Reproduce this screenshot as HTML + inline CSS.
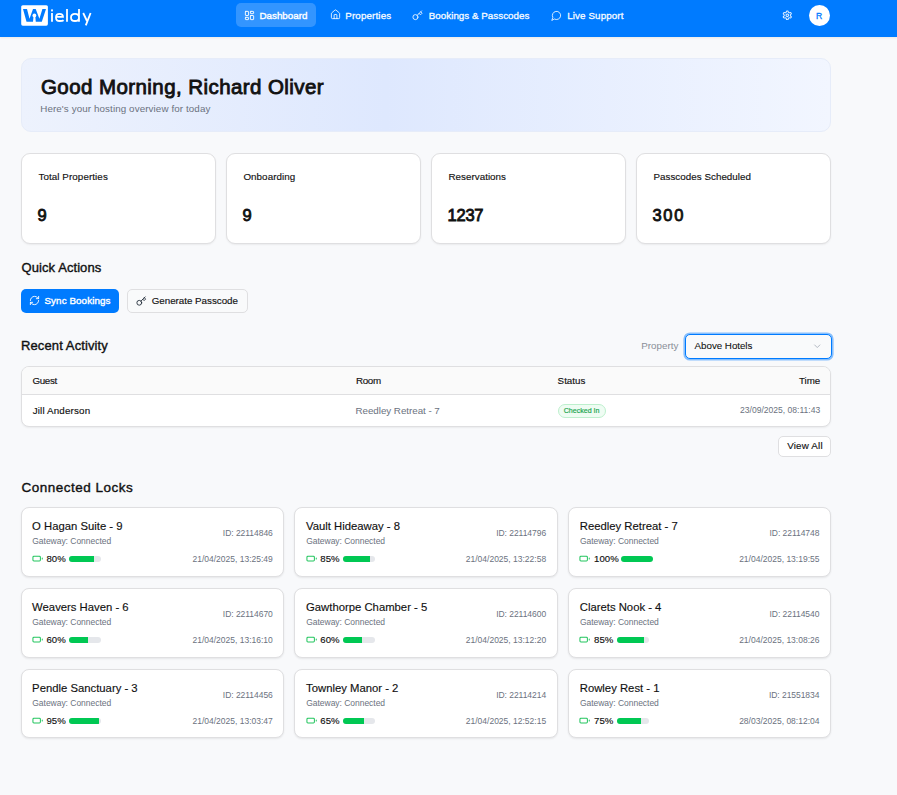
<!DOCTYPE html>
<html><head><meta charset="utf-8"><title>Wieldy Dashboard</title>
<style>
html,body{margin:0;padding:0}
body{width:897px;height:795px;position:relative;overflow:hidden;background:#f8f9fb;font-family:"Liberation Sans", sans-serif}
.t{position:absolute;white-space:nowrap;font-family:"Liberation Sans", sans-serif}
svg{display:block}
</style></head><body>
<div style="position:absolute;left:0px;top:0px;width:897px;height:37px;box-sizing:border-box;background:#007bff;box-shadow:0 1px 2px rgba(60,40,0,0.08)"></div>
<svg style="position:absolute;left:20px;top:4px" width="80" height="23" viewBox="0 0 80 23">
<rect x="1.2" y="1.2" width="26.7" height="20.5" rx="1.6" fill="#fff"/>
<path d="M3,5 L7,5 L9.5,14.7 L13,5 L15.7,5 L19.4,14.7 L22.4,5 L26,5 L21.8,17.7 L6.5,17.7 Z" fill="#007bff"/>
<circle cx="14.4" cy="11.4" r="1.9" fill="#fff"/>
<path d="M13.5,12.2 L15.3,12.2 L15.8,17.9 L13,17.9 Z" fill="#fff"/>
<g fill="none" stroke="#fff" stroke-width="1.8">
<rect x="31.1" y="5.4" width="1.8" height="2" fill="#fff" stroke="none"/>
<line x1="32" y1="9.1" x2="32" y2="17.7"/>
<path d="M43.6,16.2 Q42.6,17 39.6,17 Q36,17 36,13.4 Q36,9.8 39.5,9.8 Q43,9.8 43,12.9 H36.2"/>
<line x1="47" y1="5.1" x2="47" y2="17.7"/>
<path d="M59,13.4 Q59,9.8 55,9.8 Q51,9.8 51,13.4 Q51,17 55,17 Q59,17 59,13.4 M59,5.1 V17.7"/>
<line x1="63.2" y1="9" x2="67" y2="17"/>
<line x1="70.6" y1="9" x2="65.8" y2="21.4"/>
</g></svg>
<div style="position:absolute;left:236px;top:3px;width:80px;height:24px;box-sizing:border-box;background:rgba(255,255,255,0.2);border-radius:5px"></div>
<svg style="position:absolute;left:243.9px;top:10.2px" width="11" height="11" viewBox="0 0 24 24" fill="none" stroke="#fff" stroke-width="2" stroke-linecap="round" stroke-linejoin="round"><rect width="7" height="9" x="3" y="3" rx="1"/><rect width="7" height="5" x="14" y="3" rx="1"/><rect width="7" height="9" x="14" y="12" rx="1"/><rect width="7" height="5" x="3" y="16" rx="1"/></svg>
<div class="t" style="left:259.41px;top:11.00px;font-size:9.8px;line-height:9.8px;color:#fff;-webkit-text-stroke:0.38px #fff;letter-spacing:0.02px;">Dashboard</div>
<svg style="position:absolute;left:329.8px;top:9.4px" width="11" height="11" viewBox="0 0 24 24" fill="none" stroke="rgba(255,255,255,0.9)" stroke-width="2" stroke-linecap="round" stroke-linejoin="round"><path d="M15 21v-8a1 1 0 0 0-1-1h-4a1 1 0 0 0-1 1v8"/><path d="M3 10a2 2 0 0 1 .709-1.528l7-5.999a2 2 0 0 1 2.582 0l7 5.999A2 2 0 0 1 21 10v9a2 2 0 0 1-2 2H5a2 2 0 0 1-2-2z"/></svg>
<div class="t" style="left:345.21px;top:11.00px;font-size:9.8px;line-height:9.8px;color:rgba(255,255,255,0.9);-webkit-text-stroke:0.38px rgba(255,255,255,0.9);letter-spacing:0.148px;">Properties</div>
<svg style="position:absolute;left:412.4px;top:9.7px" width="11" height="11" viewBox="0 0 24 24" fill="none" stroke="rgba(255,255,255,0.9)" stroke-width="2" stroke-linecap="round" stroke-linejoin="round"><circle cx="7.5" cy="15.5" r="5.5"/><path d="m21 2-9.6 9.6"/><path d="m15.5 7.5 3 3L22 7l-3-3"/></svg>
<div class="t" style="left:428.81px;top:11.00px;font-size:9.8px;line-height:9.8px;color:rgba(255,255,255,0.9);-webkit-text-stroke:0.38px rgba(255,255,255,0.9);letter-spacing:0.019px;">Bookings &amp; Passcodes</div>
<svg style="position:absolute;left:550.7px;top:9.6px" width="11" height="11" viewBox="0 0 24 24" fill="none" stroke="rgba(255,255,255,0.9)" stroke-width="2" stroke-linecap="round" stroke-linejoin="round"><path d="M7.9 20A9 9 0 1 0 4 16.1L2 22Z"/></svg>
<div class="t" style="left:567.31px;top:11.00px;font-size:9.8px;line-height:9.8px;color:rgba(255,255,255,0.9);-webkit-text-stroke:0.38px rgba(255,255,255,0.9);letter-spacing:0.098px;">Live Support</div>
<svg style="position:absolute;left:782.2px;top:9.7px" width="10.6" height="10.6" viewBox="0 0 24 24" fill="none" stroke="rgba(255,255,255,0.9)" stroke-width="2.3" stroke-linecap="round" stroke-linejoin="round"><path d="M12.22 2h-.44a2 2 0 0 0-2 2v.18a2 2 0 0 1-1 1.73l-.43.25a2 2 0 0 1-2 0l-.15-.08a2 2 0 0 0-2.73.73l-.22.38a2 2 0 0 0 .73 2.73l.15.1a2 2 0 0 1 1 1.72v.51a2 2 0 0 1-1 1.74l-.15.09a2 2 0 0 0-.73 2.73l.22.38a2 2 0 0 0 2.73.73l.15-.08a2 2 0 0 1 2 0l.43.25a2 2 0 0 1 1 1.73V20a2 2 0 0 0 2 2h.44a2 2 0 0 0 2-2v-.18a2 2 0 0 1 1-1.73l.43-.25a2 2 0 0 1 2 0l.15.08a2 2 0 0 0 2.73-.73l.22-.39a2 2 0 0 0-.73-2.73l-.15-.08a2 2 0 0 1-1-1.74v-.5a2 2 0 0 1 1-1.74l.15-.09a2 2 0 0 0 .73-2.73l-.22-.38a2 2 0 0 0-2.73-.73l-.15.08a2 2 0 0 1-2 0l-.43-.25a2 2 0 0 1-1-1.73V4a2 2 0 0 0-2-2z"/><circle cx="12" cy="12" r="3"/></svg>
<div style="position:absolute;left:809px;top:5px;width:21px;height:21px;box-sizing:border-box;background:#fff;border-radius:50%"></div>
<div class="t" style="left:816.01px;top:11.00px;font-size:9.8px;line-height:9.8px;color:#007bff;-webkit-text-stroke:0.35px #007bff;transform:scaleX(0.88);transform-origin:left;">R</div>
<div style="position:absolute;left:21px;top:58px;width:810px;height:74px;box-sizing:border-box;background:linear-gradient(90deg,#edf2fd 0%,#dee8fe 45%,#f2f6ff 100%);border:1px solid #e6ecf9;border-radius:10px"></div>
<div class="t" style="left:40.97px;top:76.95px;font-size:20.5px;line-height:20.5px;color:#111111;-webkit-text-stroke:0.85px #111111;letter-spacing:0.427px;">Good Morning, Richard Oliver</div>
<div class="t" style="left:40.21px;top:104.00px;font-size:9.8px;line-height:9.8px;color:#6b7280;letter-spacing:0.104px;">Here's your hosting overview for today</div>
<div style="position:absolute;left:21px;top:153px;width:195px;height:90.5px;box-sizing:border-box;background:#fff;border:1px solid #dfdfe1;border-radius:9px;box-shadow:0 1px 2px rgba(0,0,0,0.06)"></div>
<div class="t" style="left:38.41px;top:172.00px;font-size:9.8px;line-height:9.8px;color:#111111;-webkit-text-stroke:0.14px #111111;letter-spacing:0.087px;">Total Properties</div>
<div class="t" style="left:37.61px;top:207.33px;font-size:16.5px;line-height:16.5px;color:#111111;-webkit-text-stroke:0.85px #111111;letter-spacing:0.122px;">9</div>
<div style="position:absolute;left:226px;top:153px;width:195px;height:90.5px;box-sizing:border-box;background:#fff;border:1px solid #dfdfe1;border-radius:9px;box-shadow:0 1px 2px rgba(0,0,0,0.06)"></div>
<div class="t" style="left:243.41px;top:172.00px;font-size:9.8px;line-height:9.8px;color:#111111;-webkit-text-stroke:0.14px #111111;letter-spacing:0.065px;">Onboarding</div>
<div class="t" style="left:242.61px;top:207.33px;font-size:16.5px;line-height:16.5px;color:#111111;-webkit-text-stroke:0.85px #111111;letter-spacing:0.122px;">9</div>
<div style="position:absolute;left:431px;top:153px;width:195px;height:90.5px;box-sizing:border-box;background:#fff;border:1px solid #dfdfe1;border-radius:9px;box-shadow:0 1px 2px rgba(0,0,0,0.06)"></div>
<div class="t" style="left:448.41px;top:172.00px;font-size:9.8px;line-height:9.8px;color:#111111;-webkit-text-stroke:0.14px #111111;letter-spacing:0.037px;">Reservations</div>
<div class="t" style="left:447.61px;top:207.33px;font-size:16.5px;line-height:16.5px;color:#111111;-webkit-text-stroke:0.85px #111111;letter-spacing:-0.269px;">1237</div>
<div style="position:absolute;left:636px;top:153px;width:195px;height:90.5px;box-sizing:border-box;background:#fff;border:1px solid #dfdfe1;border-radius:9px;box-shadow:0 1px 2px rgba(0,0,0,0.06)"></div>
<div class="t" style="left:653.41px;top:172.00px;font-size:9.8px;line-height:9.8px;color:#111111;-webkit-text-stroke:0.14px #111111;letter-spacing:0.035px;">Passcodes Scheduled</div>
<div class="t" style="left:652.61px;top:207.33px;font-size:16.5px;line-height:16.5px;color:#111111;-webkit-text-stroke:0.85px #111111;letter-spacing:1.584px;">300</div>
<div class="t" style="left:21.62px;top:261.30px;font-size:13px;line-height:13px;color:#111111;-webkit-text-stroke:0.38px #111111;letter-spacing:0.07px;">Quick Actions</div>
<div style="position:absolute;left:21px;top:289px;width:98px;height:24px;box-sizing:border-box;background:#007bff;border-radius:5px"></div>
<svg style="position:absolute;left:28.9px;top:294.8px" width="11" height="11" viewBox="0 0 24 24" fill="none" stroke="#fff" stroke-width="2" stroke-linecap="round" stroke-linejoin="round"><path d="M3 12a9 9 0 0 1 9-9 9.75 9.75 0 0 1 6.74 2.74L21 8"/><path d="M21 3v5h-5"/><path d="M21 12a9 9 0 0 1-9 9 9.75 9.75 0 0 1-6.74-2.74L3 16"/><path d="M8 16H3v5"/></svg>
<div class="t" style="left:44.51px;top:296.00px;font-size:9.8px;line-height:9.8px;color:#fff;-webkit-text-stroke:0.38px #fff;letter-spacing:0.09px;">Sync Bookings</div>
<div style="position:absolute;left:127px;top:289px;width:121px;height:24px;box-sizing:border-box;background:#f9fafb;border:1px solid #dfdfe1;border-radius:5px"></div>
<svg style="position:absolute;left:136px;top:295.6px" width="10.5" height="10.5" viewBox="0 0 24 24" fill="none" stroke="#1f2937" stroke-width="2" stroke-linecap="round" stroke-linejoin="round"><circle cx="7.5" cy="15.5" r="5.5"/><path d="m21 2-9.6 9.6"/><path d="m15.5 7.5 3 3L22 7l-3-3"/></svg>
<div class="t" style="left:151.71px;top:296.00px;font-size:9.8px;line-height:9.8px;color:#111111;-webkit-text-stroke:0.14px #111111;letter-spacing:-0.02px;">Generate Passcode</div>
<div class="t" style="left:21.02px;top:339.30px;font-size:13px;line-height:13px;color:#111111;-webkit-text-stroke:0.38px #111111;letter-spacing:0.11px;">Recent Activity</div>
<div class="t" style="left:641.31px;top:341.00px;font-size:9.8px;line-height:9.8px;color:#8a8f98;letter-spacing:-0.005px;">Property</div>
<div style="position:absolute;left:684.5px;top:333.5px;width:147px;height:25px;box-sizing:border-box;background:#f9fafb;border:1.5px solid #007bff;border-radius:5px;box-shadow:0 0 0 1.6px rgba(0,123,255,0.45)"></div>
<div class="t" style="left:694.61px;top:341.00px;font-size:9.8px;line-height:9.8px;color:#111111;letter-spacing:-0.044px;-webkit-text-stroke:0.08px #111;">Above Hotels</div>
<svg style="position:absolute;left:812.1px;top:341px" width="10.5" height="10.5" viewBox="0 0 24 24" fill="none" stroke="#9ca3af" stroke-width="1.7" stroke-linecap="round" stroke-linejoin="round"><path d="m6 9 6 6 6-6"/></svg>
<div style="position:absolute;left:21px;top:366px;width:810px;height:61px;box-sizing:border-box;background:#fff;border:1px solid #dfdfe1;border-radius:8px;box-shadow:0 1px 2px rgba(0,0,0,0.06);overflow:hidden"></div>
<div style="position:absolute;left:22px;top:367px;width:808px;height:27.5px;box-sizing:border-box;background:#fafafa;border-radius:7px 7px 0 0"></div>
<div style="position:absolute;left:22px;top:394px;width:808px;height:1px;box-sizing:border-box;background:#dfdfe1"></div>
<div class="t" style="left:32.61px;top:376.00px;font-size:9.8px;line-height:9.8px;color:#111111;-webkit-text-stroke:0.14px #111111;letter-spacing:-0.412px;">Guest</div>
<div class="t" style="left:356.11px;top:376.00px;font-size:9.8px;line-height:9.8px;color:#111111;-webkit-text-stroke:0.14px #111111;letter-spacing:-0.381px;">Room</div>
<div class="t" style="left:557.61px;top:376.00px;font-size:9.8px;line-height:9.8px;color:#111111;-webkit-text-stroke:0.14px #111111;letter-spacing:0.003px;">Status</div>
<div class="t" style="right:76.72px;top:376.00px;font-size:9.8px;line-height:9.8px;color:#111111;-webkit-text-stroke:0.14px #111111;letter-spacing:-0.005px;">Time</div>
<div class="t" style="left:32.71px;top:406.00px;font-size:9.8px;line-height:9.8px;color:#111111;-webkit-text-stroke:0.14px #111111;letter-spacing:0.153px;">Jill Anderson</div>
<div class="t" style="left:355.51px;top:406.00px;font-size:9.8px;line-height:9.8px;color:#6b7280;letter-spacing:-0.038px;">Reedley Retreat - 7</div>
<div style="position:absolute;left:558px;top:404px;width:48.2px;height:14px;box-sizing:border-box;background:#effcf3;border:1px solid #bdf0cd;border-radius:7px"></div>
<div class="t" style="left:563.67px;top:408.29px;font-size:7.1px;line-height:7.1px;color:#16a34a;letter-spacing:-0.002px;-webkit-text-stroke:0.15px #16a34a;">Checked In</div>
<div class="t" style="right:76.79px;top:406.05px;font-size:8.56px;line-height:8.56px;color:#6b7280;letter-spacing:0.001px;">23/09/2025, 08:11:43</div>
<div style="position:absolute;left:777.5px;top:435.5px;width:53px;height:21px;box-sizing:border-box;background:#fff;border:1px solid #dfdfe1;border-radius:5px"></div>
<div class="t" style="left:787.21px;top:441.00px;font-size:9.8px;line-height:9.8px;color:#111111;-webkit-text-stroke:0.14px #111111;letter-spacing:0.18px;">View All</div>
<div class="t" style="left:21.49px;top:480.87px;font-size:13.5px;line-height:13.5px;color:#111111;-webkit-text-stroke:0.38px #111111;letter-spacing:0.499px;">Connected Locks</div>
<div style="position:absolute;left:21.0px;top:507.4px;width:263.33px;height:69.4px;box-sizing:border-box;background:#fff;border:1px solid #dfdfe1;border-radius:8px;box-shadow:0 1px 2px rgba(0,0,0,0.08)"></div>
<div class="t" style="left:32.12px;top:520.73px;font-size:11.3px;line-height:11.3px;color:#111111;-webkit-text-stroke:0.14px #111111;">O Hagan Suite - 9</div>
<div class="t" style="left:32.29px;top:537.10px;font-size:8.5px;line-height:8.5px;color:#6b7280;letter-spacing:-0.03px;">Gateway: Connected</div>
<svg style="position:absolute;left:31.6px;top:553.1999999999999px" width="11.2" height="11.2" viewBox="0 0 24 24" fill="none" stroke="#22c55e" stroke-width="2.2" stroke-linecap="round" stroke-linejoin="round"><rect width="16" height="10" x="2" y="7" rx="2" ry="2"/><line x1="22" x2="22" y1="11" y2="13"/></svg>
<div class="t" style="left:46.42px;top:554.17px;font-size:9.6px;line-height:9.6px;color:#111111;letter-spacing:0.05px;-webkit-text-stroke:0.15px #111;">80%</div>
<div style="position:absolute;left:68.90px;top:556.00px;width:32px;height:6px;background:#e5e7eb;border-radius:3px;overflow:hidden"><div style="width:25.60px;height:6px;background:#00c853"></div></div>
<div class="t" style="right:624.23px;top:529.10px;font-size:8.5px;line-height:8.5px;color:#6b7280;letter-spacing:-0.04px;">ID: 22114846</div>
<div class="t" style="right:624.19px;top:555.10px;font-size:8.5px;line-height:8.5px;color:#6b7280;">21/04/2025, 13:25:49</div>
<div style="position:absolute;left:294.33px;top:507.4px;width:263.33px;height:69.4px;box-sizing:border-box;background:#fff;border:1px solid #dfdfe1;border-radius:8px;box-shadow:0 1px 2px rgba(0,0,0,0.08)"></div>
<div class="t" style="left:306.05px;top:520.73px;font-size:11.3px;line-height:11.3px;color:#111111;-webkit-text-stroke:0.14px #111111;">Vault Hideaway - 8</div>
<div class="t" style="left:306.22px;top:537.10px;font-size:8.5px;line-height:8.5px;color:#6b7280;letter-spacing:-0.03px;">Gateway: Connected</div>
<svg style="position:absolute;left:305.53000000000003px;top:553.1999999999999px" width="11.2" height="11.2" viewBox="0 0 24 24" fill="none" stroke="#22c55e" stroke-width="2.2" stroke-linecap="round" stroke-linejoin="round"><rect width="16" height="10" x="2" y="7" rx="2" ry="2"/><line x1="22" x2="22" y1="11" y2="13"/></svg>
<div class="t" style="left:320.35px;top:554.17px;font-size:9.6px;line-height:9.6px;color:#111111;letter-spacing:0.05px;-webkit-text-stroke:0.15px #111;">85%</div>
<div style="position:absolute;left:342.83px;top:556.00px;width:32px;height:6px;background:#e5e7eb;border-radius:3px;overflow:hidden"><div style="width:27.20px;height:6px;background:#00c853"></div></div>
<div class="t" style="right:350.90px;top:529.10px;font-size:8.5px;line-height:8.5px;color:#6b7280;letter-spacing:-0.04px;">ID: 22114796</div>
<div class="t" style="right:350.86px;top:555.10px;font-size:8.5px;line-height:8.5px;color:#6b7280;">21/04/2025, 13:22:58</div>
<div style="position:absolute;left:567.66px;top:507.4px;width:263.33px;height:69.4px;box-sizing:border-box;background:#fff;border:1px solid #dfdfe1;border-radius:8px;box-shadow:0 1px 2px rgba(0,0,0,0.08)"></div>
<div class="t" style="left:579.78px;top:520.73px;font-size:11.3px;line-height:11.3px;color:#111111;-webkit-text-stroke:0.14px #111111;">Reedley Retreat - 7</div>
<div class="t" style="left:579.95px;top:537.10px;font-size:8.5px;line-height:8.5px;color:#6b7280;letter-spacing:-0.03px;">Gateway: Connected</div>
<svg style="position:absolute;left:579.26px;top:553.1999999999999px" width="11.2" height="11.2" viewBox="0 0 24 24" fill="none" stroke="#22c55e" stroke-width="2.2" stroke-linecap="round" stroke-linejoin="round"><rect width="16" height="10" x="2" y="7" rx="2" ry="2"/><line x1="22" x2="22" y1="11" y2="13"/></svg>
<div class="t" style="left:594.08px;top:554.17px;font-size:9.6px;line-height:9.6px;color:#111111;letter-spacing:0.05px;-webkit-text-stroke:0.15px #111;">100%</div>
<div style="position:absolute;left:620.86px;top:556.00px;width:32px;height:6px;background:#e5e7eb;border-radius:3px;overflow:hidden"><div style="width:32.00px;height:6px;background:#00c853"></div></div>
<div class="t" style="right:77.57px;top:529.10px;font-size:8.5px;line-height:8.5px;color:#6b7280;letter-spacing:-0.04px;">ID: 22114748</div>
<div class="t" style="right:77.53px;top:555.10px;font-size:8.5px;line-height:8.5px;color:#6b7280;">21/04/2025, 13:19:55</div>
<div style="position:absolute;left:21.0px;top:588.1999999999999px;width:263.33px;height:69.4px;box-sizing:border-box;background:#fff;border:1px solid #dfdfe1;border-radius:8px;box-shadow:0 1px 2px rgba(0,0,0,0.08)"></div>
<div class="t" style="left:32.12px;top:601.73px;font-size:11.3px;line-height:11.3px;color:#111111;-webkit-text-stroke:0.14px #111111;">Weavers Haven - 6</div>
<div class="t" style="left:32.29px;top:618.10px;font-size:8.5px;line-height:8.5px;color:#6b7280;letter-spacing:-0.03px;">Gateway: Connected</div>
<svg style="position:absolute;left:31.6px;top:633.9999999999999px" width="11.2" height="11.2" viewBox="0 0 24 24" fill="none" stroke="#22c55e" stroke-width="2.2" stroke-linecap="round" stroke-linejoin="round"><rect width="16" height="10" x="2" y="7" rx="2" ry="2"/><line x1="22" x2="22" y1="11" y2="13"/></svg>
<div class="t" style="left:46.42px;top:635.17px;font-size:9.6px;line-height:9.6px;color:#111111;letter-spacing:0.05px;-webkit-text-stroke:0.15px #111;">60%</div>
<div style="position:absolute;left:68.90px;top:636.80px;width:32px;height:6px;background:#e5e7eb;border-radius:3px;overflow:hidden"><div style="width:19.20px;height:6px;background:#00c853"></div></div>
<div class="t" style="right:624.23px;top:610.10px;font-size:8.5px;line-height:8.5px;color:#6b7280;letter-spacing:-0.04px;">ID: 22114670</div>
<div class="t" style="right:624.19px;top:636.10px;font-size:8.5px;line-height:8.5px;color:#6b7280;">21/04/2025, 13:16:10</div>
<div style="position:absolute;left:294.33px;top:588.1999999999999px;width:263.33px;height:69.4px;box-sizing:border-box;background:#fff;border:1px solid #dfdfe1;border-radius:8px;box-shadow:0 1px 2px rgba(0,0,0,0.08)"></div>
<div class="t" style="left:306.05px;top:601.73px;font-size:11.3px;line-height:11.3px;color:#111111;-webkit-text-stroke:0.14px #111111;">Gawthorpe Chamber - 5</div>
<div class="t" style="left:306.22px;top:618.10px;font-size:8.5px;line-height:8.5px;color:#6b7280;letter-spacing:-0.03px;">Gateway: Connected</div>
<svg style="position:absolute;left:305.53000000000003px;top:633.9999999999999px" width="11.2" height="11.2" viewBox="0 0 24 24" fill="none" stroke="#22c55e" stroke-width="2.2" stroke-linecap="round" stroke-linejoin="round"><rect width="16" height="10" x="2" y="7" rx="2" ry="2"/><line x1="22" x2="22" y1="11" y2="13"/></svg>
<div class="t" style="left:320.35px;top:635.17px;font-size:9.6px;line-height:9.6px;color:#111111;letter-spacing:0.05px;-webkit-text-stroke:0.15px #111;">60%</div>
<div style="position:absolute;left:342.83px;top:636.80px;width:32px;height:6px;background:#e5e7eb;border-radius:3px;overflow:hidden"><div style="width:19.20px;height:6px;background:#00c853"></div></div>
<div class="t" style="right:350.90px;top:610.10px;font-size:8.5px;line-height:8.5px;color:#6b7280;letter-spacing:-0.04px;">ID: 22114600</div>
<div class="t" style="right:350.86px;top:636.10px;font-size:8.5px;line-height:8.5px;color:#6b7280;">21/04/2025, 13:12:20</div>
<div style="position:absolute;left:567.66px;top:588.1999999999999px;width:263.33px;height:69.4px;box-sizing:border-box;background:#fff;border:1px solid #dfdfe1;border-radius:8px;box-shadow:0 1px 2px rgba(0,0,0,0.08)"></div>
<div class="t" style="left:579.78px;top:601.73px;font-size:11.3px;line-height:11.3px;color:#111111;-webkit-text-stroke:0.14px #111111;">Clarets Nook - 4</div>
<div class="t" style="left:579.95px;top:618.10px;font-size:8.5px;line-height:8.5px;color:#6b7280;letter-spacing:-0.03px;">Gateway: Connected</div>
<svg style="position:absolute;left:579.26px;top:633.9999999999999px" width="11.2" height="11.2" viewBox="0 0 24 24" fill="none" stroke="#22c55e" stroke-width="2.2" stroke-linecap="round" stroke-linejoin="round"><rect width="16" height="10" x="2" y="7" rx="2" ry="2"/><line x1="22" x2="22" y1="11" y2="13"/></svg>
<div class="t" style="left:594.08px;top:635.17px;font-size:9.6px;line-height:9.6px;color:#111111;letter-spacing:0.05px;-webkit-text-stroke:0.15px #111;">85%</div>
<div style="position:absolute;left:616.56px;top:636.80px;width:32px;height:6px;background:#e5e7eb;border-radius:3px;overflow:hidden"><div style="width:27.20px;height:6px;background:#00c853"></div></div>
<div class="t" style="right:77.57px;top:610.10px;font-size:8.5px;line-height:8.5px;color:#6b7280;letter-spacing:-0.04px;">ID: 22114540</div>
<div class="t" style="right:77.53px;top:636.10px;font-size:8.5px;line-height:8.5px;color:#6b7280;">21/04/2025, 13:08:26</div>
<div style="position:absolute;left:21.0px;top:669.0px;width:263.33px;height:69.4px;box-sizing:border-box;background:#fff;border:1px solid #dfdfe1;border-radius:8px;box-shadow:0 1px 2px rgba(0,0,0,0.08)"></div>
<div class="t" style="left:32.12px;top:682.73px;font-size:11.3px;line-height:11.3px;color:#111111;-webkit-text-stroke:0.14px #111111;">Pendle Sanctuary - 3</div>
<div class="t" style="left:32.29px;top:699.10px;font-size:8.5px;line-height:8.5px;color:#6b7280;letter-spacing:-0.03px;">Gateway: Connected</div>
<svg style="position:absolute;left:31.6px;top:714.8px" width="11.2" height="11.2" viewBox="0 0 24 24" fill="none" stroke="#22c55e" stroke-width="2.2" stroke-linecap="round" stroke-linejoin="round"><rect width="16" height="10" x="2" y="7" rx="2" ry="2"/><line x1="22" x2="22" y1="11" y2="13"/></svg>
<div class="t" style="left:46.42px;top:716.17px;font-size:9.6px;line-height:9.6px;color:#111111;letter-spacing:0.05px;-webkit-text-stroke:0.15px #111;">95%</div>
<div style="position:absolute;left:68.90px;top:717.60px;width:32px;height:6px;background:#e5e7eb;border-radius:3px;overflow:hidden"><div style="width:30.40px;height:6px;background:#00c853"></div></div>
<div class="t" style="right:624.23px;top:691.10px;font-size:8.5px;line-height:8.5px;color:#6b7280;letter-spacing:-0.04px;">ID: 22114456</div>
<div class="t" style="right:624.19px;top:717.10px;font-size:8.5px;line-height:8.5px;color:#6b7280;">21/04/2025, 13:03:47</div>
<div style="position:absolute;left:294.33px;top:669.0px;width:263.33px;height:69.4px;box-sizing:border-box;background:#fff;border:1px solid #dfdfe1;border-radius:8px;box-shadow:0 1px 2px rgba(0,0,0,0.08)"></div>
<div class="t" style="left:306.05px;top:682.73px;font-size:11.3px;line-height:11.3px;color:#111111;-webkit-text-stroke:0.14px #111111;">Townley Manor - 2</div>
<div class="t" style="left:306.22px;top:699.10px;font-size:8.5px;line-height:8.5px;color:#6b7280;letter-spacing:-0.03px;">Gateway: Connected</div>
<svg style="position:absolute;left:305.53000000000003px;top:714.8px" width="11.2" height="11.2" viewBox="0 0 24 24" fill="none" stroke="#22c55e" stroke-width="2.2" stroke-linecap="round" stroke-linejoin="round"><rect width="16" height="10" x="2" y="7" rx="2" ry="2"/><line x1="22" x2="22" y1="11" y2="13"/></svg>
<div class="t" style="left:320.35px;top:716.17px;font-size:9.6px;line-height:9.6px;color:#111111;letter-spacing:0.05px;-webkit-text-stroke:0.15px #111;">65%</div>
<div style="position:absolute;left:342.83px;top:717.60px;width:32px;height:6px;background:#e5e7eb;border-radius:3px;overflow:hidden"><div style="width:20.80px;height:6px;background:#00c853"></div></div>
<div class="t" style="right:350.90px;top:691.10px;font-size:8.5px;line-height:8.5px;color:#6b7280;letter-spacing:-0.04px;">ID: 22114214</div>
<div class="t" style="right:350.86px;top:717.10px;font-size:8.5px;line-height:8.5px;color:#6b7280;">21/04/2025, 12:52:15</div>
<div style="position:absolute;left:567.66px;top:669.0px;width:263.33px;height:69.4px;box-sizing:border-box;background:#fff;border:1px solid #dfdfe1;border-radius:8px;box-shadow:0 1px 2px rgba(0,0,0,0.08)"></div>
<div class="t" style="left:579.78px;top:682.73px;font-size:11.3px;line-height:11.3px;color:#111111;-webkit-text-stroke:0.14px #111111;">Rowley Rest - 1</div>
<div class="t" style="left:579.95px;top:699.10px;font-size:8.5px;line-height:8.5px;color:#6b7280;letter-spacing:-0.03px;">Gateway: Connected</div>
<svg style="position:absolute;left:579.26px;top:714.8px" width="11.2" height="11.2" viewBox="0 0 24 24" fill="none" stroke="#22c55e" stroke-width="2.2" stroke-linecap="round" stroke-linejoin="round"><rect width="16" height="10" x="2" y="7" rx="2" ry="2"/><line x1="22" x2="22" y1="11" y2="13"/></svg>
<div class="t" style="left:594.08px;top:716.17px;font-size:9.6px;line-height:9.6px;color:#111111;letter-spacing:0.05px;-webkit-text-stroke:0.15px #111;">75%</div>
<div style="position:absolute;left:616.56px;top:717.60px;width:32px;height:6px;background:#e5e7eb;border-radius:3px;overflow:hidden"><div style="width:24.00px;height:6px;background:#00c853"></div></div>
<div class="t" style="right:77.57px;top:691.10px;font-size:8.5px;line-height:8.5px;color:#6b7280;letter-spacing:-0.04px;">ID: 21551834</div>
<div class="t" style="right:77.53px;top:717.10px;font-size:8.5px;line-height:8.5px;color:#6b7280;">28/03/2025, 08:12:04</div>
</body></html>
